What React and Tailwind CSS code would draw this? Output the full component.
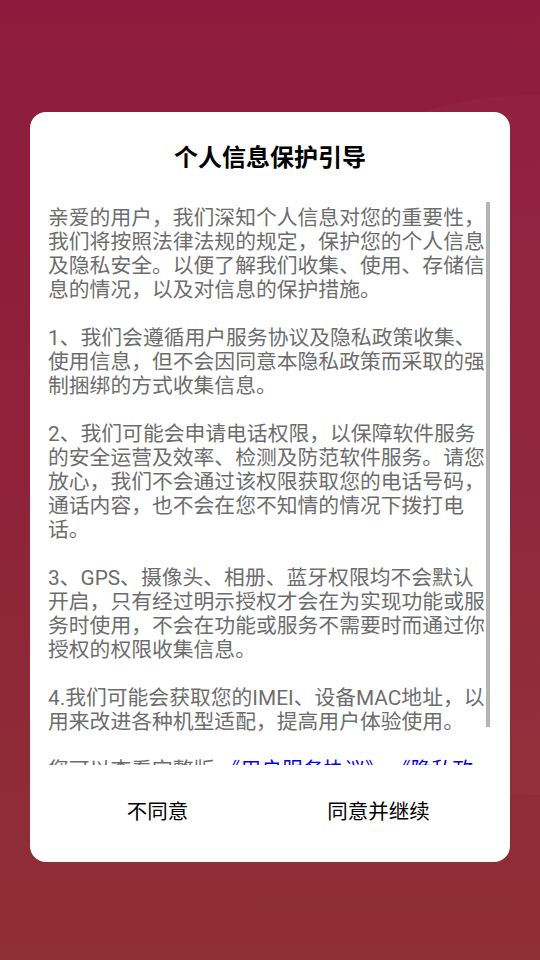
import React from 'react'

const font = "font-['Roboto','Noto_Sans_CJK_SC','Noto_Sans',sans-serif]"

// Each paragraph is kept as the exact lines of the reference
const paragraphs = [
  [
    '亲爱的用户，我们深知个人信息对您的重要性，',
    '我们将按照法律法规的规定，保护您的个人信息',
    '及隐私安全。以便了解我们收集、使用、存储信',
    '息的情况，以及对信息的保护措施。',
  ],
  [
    '1、我们会遵循用户服务协议及隐私政策收集、',
    '使用信息，但不会因同意本隐私政策而采取的强',
    '制捆绑的方式收集信息。',
  ],
  [
    '2、我们可能会申请电话权限，以保障软件服务',
    '的安全运营及效率、检测及防范软件服务。请您',
    '放心，我们不会通过该权限获取您的电话号码，',
    '通话内容，也不会在您不知情的情况下拨打电',
    '话。',
  ],
  [
    '3、GPS、摄像头、相册、蓝牙权限均不会默认',
    '开启，只有经过明示授权才会在为实现功能或服',
    '务时使用，不会在功能或服务不需要时而通过你',
    '授权的权限收集信息。',
  ],
  [
    '4.我们可能会获取您的IMEI、设备MAC地址，以',
    '用来改进各种机型适配，提高用户体验使用。',
  ],
]

function Paragraph({ lines }) {
  return (
    <p className="mb-[24px]">
      {lines.map((line, i) => (
        <span key={i} className="block whitespace-nowrap">
          {line}
        </span>
      ))}
    </p>
  )
}

export default function App() {
  return (
    <div
      className={`relative w-[540px] h-[960px] overflow-hidden bg-gradient-to-b from-[#8e1b3d] via-[#8f2239] to-[#8f3035] ${font}`}
    >
      {/* subtle light wave in the background */}
      <div className="absolute left-[180px] top-[95px] w-[900px] h-[700px] rounded-full bg-white/[0.025]" />

      <div className="relative pt-[112px] px-[30px]">
        <div className="bg-white rounded-[16px] h-[750px] flex flex-col">
          {/* Titre */}
          <h1 className="pt-[22px] h-[70px] leading-[48px] text-center text-[24px] font-semibold text-black">
            个人信息保护引导
          </h1>

          {/* Zone de texte défilante */}
          <div className="relative mt-[20px] h-[563px] overflow-hidden pl-[18px] pr-[20px]">
            <div className="pt-[4px] text-[20.8px] leading-[24px] text-[#6d6d6d]">
              {paragraphs.map((lines, i) => (
                <Paragraph key={i} lines={lines} />
              ))}
              <p>
                <span className="block whitespace-nowrap">
                  您可以查看完整版&nbsp;
                  <span className="text-[#0000ee]">《用户服务协议》</span>
                  <span className="ml-[4px]">、</span>
                  <span className="text-[#0000ee]">《隐私政</span>
                </span>
                <span className="block whitespace-nowrap">
                  <span className="text-[#0000ee]">策》</span>
                </span>
              </p>
            </div>
            {/* indicateur de défilement */}
            <div className="absolute right-[20px] top-0 w-[4px] h-[525px] bg-[#b4b4b4]" />
          </div>

          {/* Boutons */}
          <div className="flex-1 flex items-center pl-[17px] pr-[21px] pb-[3px]">
            <button className="flex-1 h-[56px] text-[20.5px] text-black">不同意</button>
            <button className="flex-1 h-[56px] text-[20.5px] text-black">同意并继续</button>
          </div>
        </div>
      </div>
    </div>
  )
}
